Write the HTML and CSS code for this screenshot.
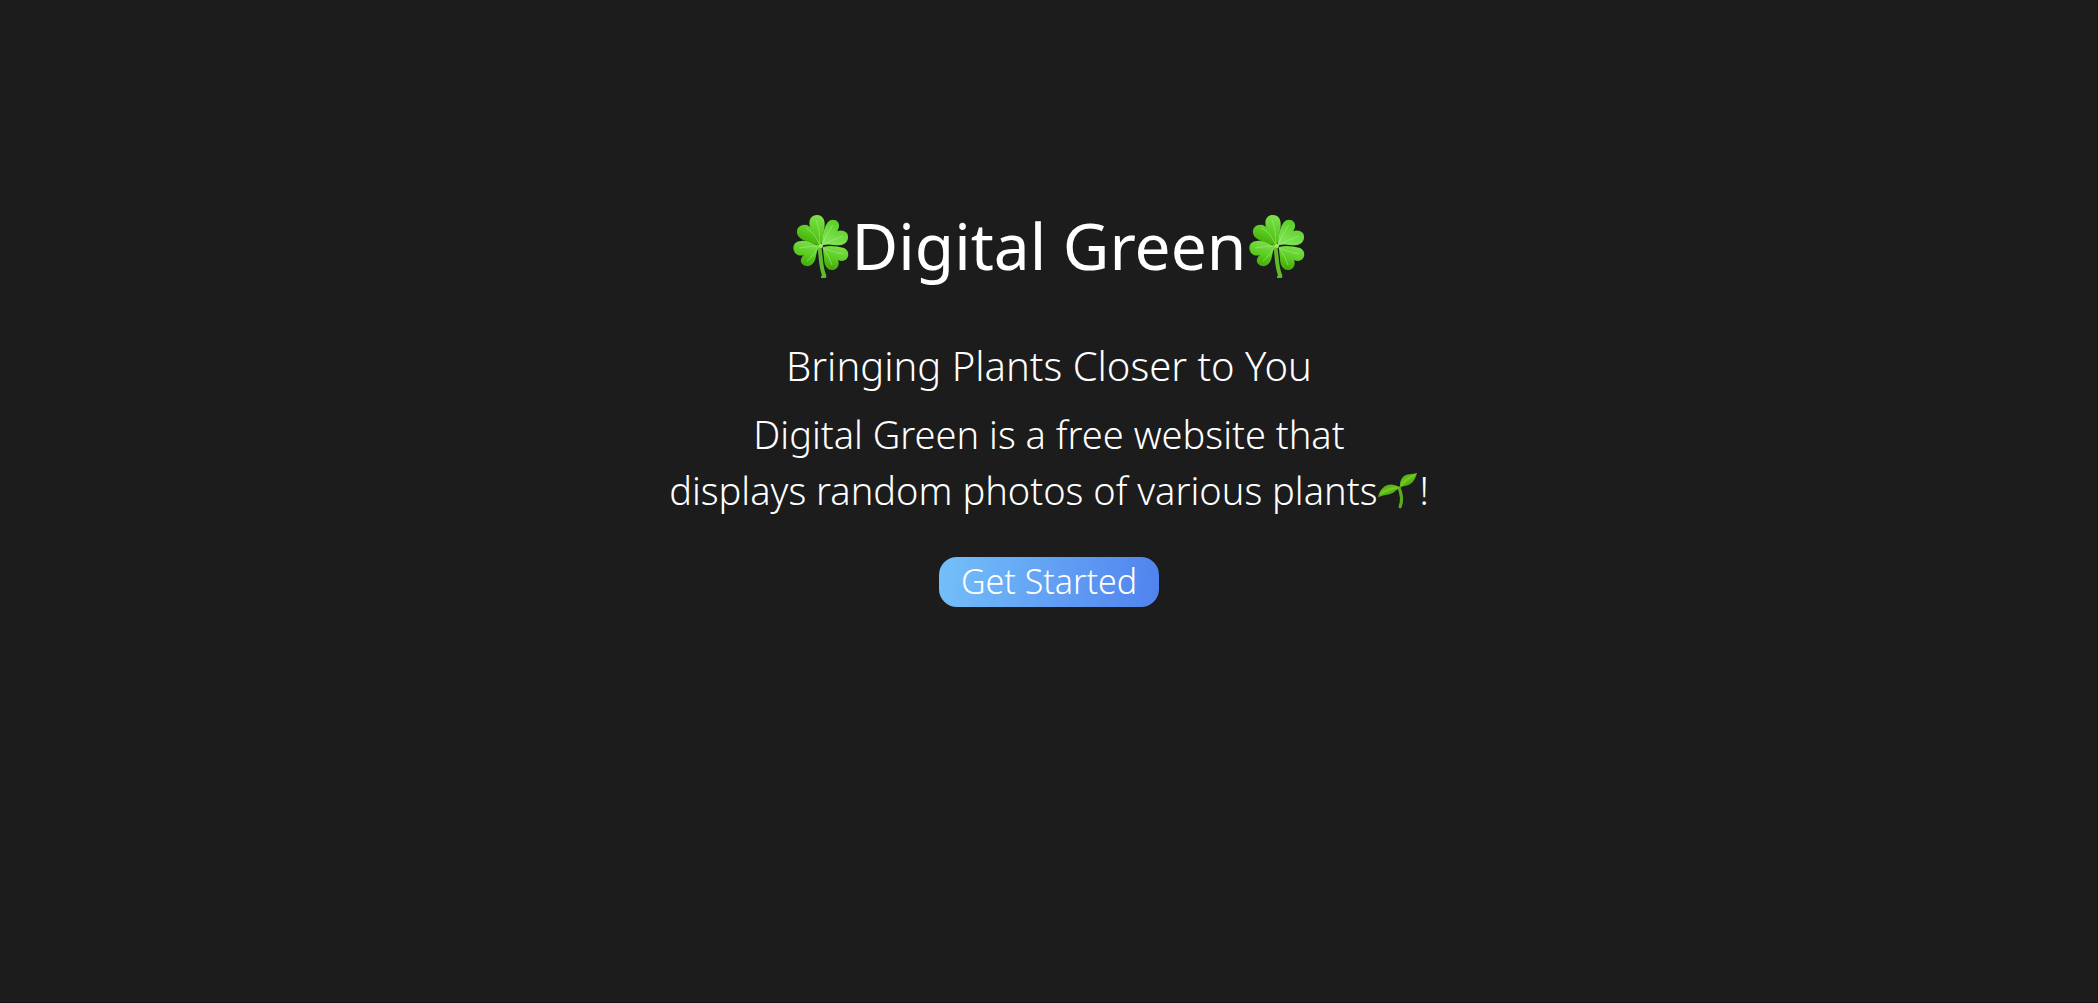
FILE: index.html
```html
<!DOCTYPE html>
<html lang="en">
<head>
  <meta charset="UTF-8">
  <meta name="viewport" content="width=device-width, initial-scale=1.0">
  <title>Digital Green</title>
  <link rel="stylesheet" href="styles.css">
</head>
<body>
  <!-- shared drawings -->
  <svg class="defs" aria-hidden="true">
    <defs>
      <linearGradient id="leaf" x1="0.6" y1="0" x2="0.3" y2="1">
        <stop offset="0" stop-color="#7be04a"></stop>
        <stop offset="0.5" stop-color="#5dcc25"></stop>
        <stop offset="1" stop-color="#3fa800"></stop>
      </linearGradient>
      <linearGradient id="leaf-light" x1="0.7" y1="0" x2="0.2" y2="1">
        <stop offset="0" stop-color="#54cc20"></stop>
        <stop offset="1" stop-color="#86e65c"></stop>
      </linearGradient>
      <linearGradient id="sprout-leaf" x1="0" y1="0" x2="0.6" y2="1">
        <stop offset="0" stop-color="#3f9a0c"></stop>
        <stop offset="0.5" stop-color="#66c41c"></stop>
        <stop offset="1" stop-color="#3c9408"></stop>
      </linearGradient>
      <symbol id="clover" viewBox="0 0 58 64">
        <path d="M27 31C29 39 28 51 32 61Q33 63 31 63" fill="none" stroke="#5fbd2c" stroke-width="4" stroke-linecap="round"></path>
        <path d="M29 32C26 31 13 28 8 24C3 20 4 12 11 11Q15 10 18 13C16 6 19 1 25 1C32 1 34 8 32 16Q31 25 29 32Z" fill="url(#leaf)"></path>
        <path d="M30 31C30 22 32 12 37 7C42 4 48 7 47 13Q46 16 45 17C51 15 57 18 56 24C55 31 48 32 42 31Q36 30 30 31Z" fill="url(#leaf-light)"></path>
        <path d="M27 32C20 30 16 26 9 27C3 27 0 32 2 37C4 42 9 42 12 41C7 45 8 51 14 52C20 53 23 48 24 42Q25 36 27 32Z" fill="url(#leaf)"></path>
        <path d="M31 33C37 31 45 32 52 34C58 37 57 44 53 46Q50 48 46 46C48 51 45 56 40 56C34 56 32 50 32 44Q31 38 31 33Z" fill="url(#leaf)"></path>
        <path d="M28 32Q24 20 14 14M28 31Q28 16 24 6M30 31Q34 20 41 11M31 31Q40 26 51 22M27 32Q17 32 7 34M27 33Q21 42 15 47M31 34Q40 38 51 40M31 34Q38 43 40 51" fill="none" stroke="#a7ed7e" stroke-width="1" opacity="0.6"></path>
        <circle cx="29" cy="32" r="2" fill="#a5ee5e"></circle>
      </symbol>
      <symbol id="sprout" viewBox="0 0 38 36">
        <path d="M21 15Q25 25 22 33" fill="none" stroke="#5cac15" stroke-width="3" stroke-linecap="round"></path>
        <path d="M1 24C3 15 9 11 15 12Q18 12 22 15C16 18 17 20 12 21Q5 22 1 24Z" fill="url(#sprout-leaf)"></path>
        <path d="M22 15C21 7 25 2 31 2Q35 2 38 1C36 8 33 12 28 13Q25 13 22 15Z" fill="url(#sprout-leaf)"></path>
        <path d="M4 21Q10 16 20 15M23 13Q28 6 35 3" fill="none" stroke="#8bd63c" stroke-width="1" opacity="0.7"></path>
      </symbol>
    </defs>
  </svg>

  <main class="hero">
    <h1 class="title">
      <svg class="clover" role="img" aria-label="clover"><use href="#clover"></use></svg>
      <span>Digital Green</span>
      <svg class="clover" role="img" aria-label="clover"><use href="#clover"></use></svg>
    </h1>
    <h2 class="subtitle">Bringing Plants Closer to You</h2>
    <p class="text">Digital Green is a free website that<br>displays random photos of various plants<svg class="sprout" role="img" aria-label="seedling"><use href="#sprout"></use></svg>!</p>
    <button class="start" type="button">Get Started</button>
  </main>
</body>
</html>
```

FILE: styles.css
```css
* {
  box-sizing: border-box;
}
body {
  margin: 0;
  min-height: 100vh;
  border-bottom: 1px solid #180f16;
  background: #1c1c1c;
  color: #fff;
  font-family: "Noto Sans", "Open Sans", sans-serif;
  font-weight: 300;
}
.defs {
  position: absolute;
  width: 0;
  height: 0;
}
.hero {
  display: flex;
  flex-direction: column;
  align-items: center;
  padding: 198px 20px 0;
  text-align: center;
}
.title {
  display: flex;
  align-items: center;
  gap: 2px;
  margin: 0;
  font-size: 64px;
  font-weight: 400;
  line-height: 96px;
}
.clover {
  width: 58px;
  height: 64px;
}
.subtitle {
  margin: 44px 0 0;
  font-size: 40px;
  font-weight: 300;
  line-height: 56px;
}
.text {
  margin: 12px 0 0;
  font-size: 38px;
  line-height: 56px;
}
.sprout {
  width: 40px;
  height: 38px;
  margin-right: 2px;
  vertical-align: -5px;
}
.start {
  margin-top: 39px;
  padding: 0 22px 2px;
  border: none;
  border-radius: 18px;
  background: linear-gradient(100deg, #74c0f9, #5082ee);
  color: #fff;
  font-family: inherit;
  font-size: 34px;
  font-weight: 300;
  line-height: 48px;
  cursor: pointer;
}
.start:hover {
  opacity: 0.9;
}
```
